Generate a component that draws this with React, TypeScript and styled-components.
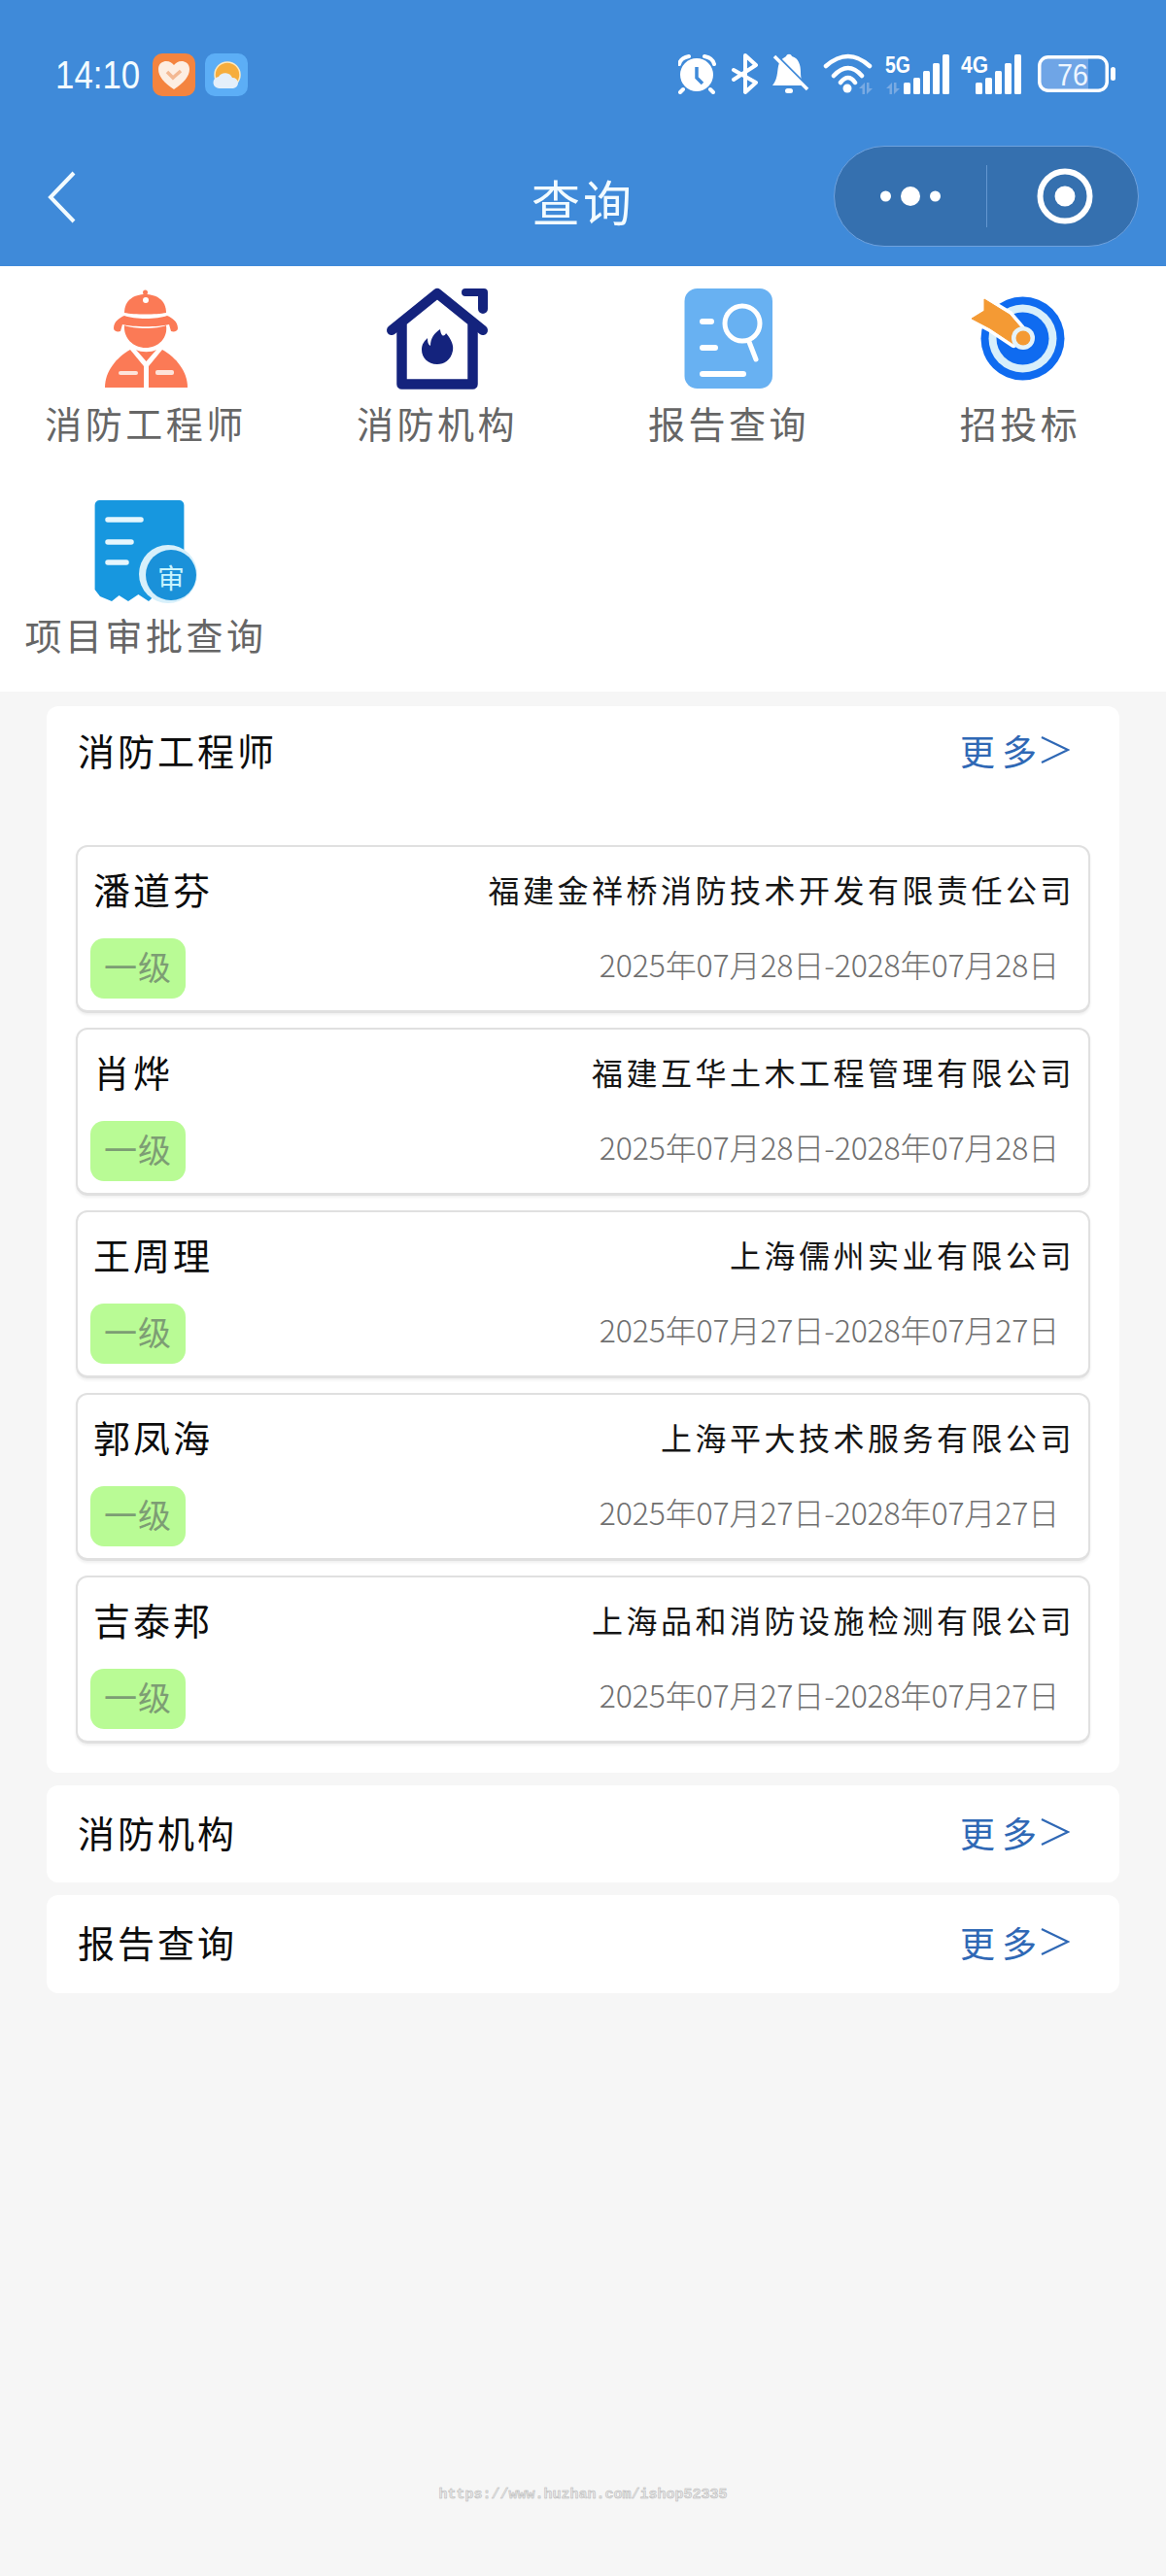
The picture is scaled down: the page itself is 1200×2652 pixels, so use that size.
import React from "react";
import styled, { createGlobalStyle } from "styled-components";

const GlobalStyle = createGlobalStyle`
  html, body { margin: 0; padding: 0; background: #f6f6f6; }
  body { font-family: "Noto Sans CJK SC", "Liberation Sans", sans-serif; }
  * { box-sizing: border-box; }
`;

const cjk = `"Noto Sans CJK SC", sans-serif`;

const engineers = [
  { name: "潘道芬", company: "福建金祥桥消防技术开发有限责任公司", term: "2025年07月28日-2028年07月28日" },
  { name: "肖烨", company: "福建互华土木工程管理有限公司", term: "2025年07月28日-2028年07月28日" },
  { name: "王周理", company: "上海儒州实业有限公司", term: "2025年07月27日-2028年07月27日" },
  { name: "郭凤海", company: "上海平大技术服务有限公司", term: "2025年07月27日-2028年07月27日" },
  { name: "吉泰邦", company: "上海品和消防设施检测有限公司", term: "2025年07月27日-2028年07月27日" },
];

const Page = styled.div`
  width: 1200px;
  height: 2652px;
  background: #f6f6f6;
  display: flex;
  flex-direction: column;
`;

const Header = styled.header`
  height: 274px;
  background: #3f8ad9;
  color: #fff;
  display: flex;
  flex-direction: column;
  flex-shrink: 0;
`;

const StatusBar = styled.div`
  height: 150px;
  padding: 55px 50px 0 57px;
  display: flex;
  justify-content: space-between;
  align-items: flex-start;
`;

const StatusLeft = styled.div`
  display: flex;
  align-items: center;
  gap: 10px;
`;

const ClockSlot = styled.div`
  width: 90px;
`;

const Clock = styled.span`
  display: inline-block;
  font-size: 41px;
  line-height: 44px;
  font-family: "Liberation Sans", sans-serif;
  color: #f2fbff;
  white-space: nowrap;
  transform: scaleX(0.85);
  transform-origin: left center;
`;

const AppBadge = styled.svg`
  width: 44px;
  height: 44px;
  display: block;
`;

const StatusGlyphs = styled.svg`
  width: 452px;
  height: 50px;
  margin-top: -5px;
  display: block;
`;

const NavBar = styled.div`
  flex: 1;
  padding: 0 28px;
  display: grid;
  grid-template-columns: 1fr auto 1fr;
  align-items: start;
`;

const BackIcon = styled.svg`
  width: 34px;
  height: 56px;
  margin: 25px 0 0 18px;
  display: block;
`;

const NavTitle = styled.h1`
  margin: 25px 0 0;
  font-size: 50px;
  line-height: 62px;
  font-weight: 400;
  letter-spacing: 3px;
  font-family: ${cjk};
  color: #f2fbff;
`;

const Capsule = styled.div`
  justify-self: end;
  width: 314px;
  height: 104px;
  border-radius: 52px;
  background: #3570af;
  border: 1.5px solid #6fa2de;
  display: flex;
  align-items: center;
`;

const CapsuleSide = styled.div`
  flex: 1;
  height: 100%;
  display: flex;
  align-items: center;
  justify-content: center;
`;

const CapsuleDivider = styled.div`
  width: 1px;
  height: 64px;
  background: #6397d0;
`;

const RingIcon = styled.svg`
  width: 58px;
  height: 58px;
  margin-left: 5px;
  display: block;
`;

const Shortcuts = styled.section`
  background: #fff;
  height: 438px;
  flex-shrink: 0;
  display: grid;
  grid-template-columns: repeat(4, 300px);
  grid-auto-rows: 218px;
  padding-top: 22px;
`;

const Shortcut = styled.div`
  display: flex;
  flex-direction: column;
  align-items: center;
`;

const ShortcutIcon = styled.svg`
  width: 110px;
  height: 106px;
  display: block;
  overflow: visible;
`;

const ShortcutLabel = styled.span`
  margin-top: 9px;
  font-size: 38px;
  line-height: 48px;
  color: #666;
  font-family: ${cjk};
  letter-spacing: 3.5px;
  white-space: nowrap;
`;

const Sections = styled.main`
  padding: 15px 48px 0;
  display: flex;
  flex-direction: column;
  gap: 13px;
`;

const Panel = styled.section`
  background: #fff;
  border-radius: 12px;
`;

const PanelHead = styled.div<{ $height: number }>`
  height: ${(p) => p.$height}px;
  padding: 0 51px 5px 32px;
  display: flex;
  align-items: center;
  justify-content: space-between;
`;

const PanelTitle = styled.h2`
  margin: 0;
  font-size: 38px;
  line-height: 48px;
  font-weight: 400;
  color: #0c0c0c;
  font-family: ${cjk};
  letter-spacing: 3px;
`;

const More = styled.span`
  display: flex;
  align-items: center;
  font-size: 36px;
  line-height: 48px;
  color: #2f68b5;
  font-family: ${cjk};
  letter-spacing: 7px;
`;

const MoreChevron = styled.svg`
  width: 32px;
  height: 30px;
  margin-left: -5px;
  display: block;
`;

const CardList = styled.div`
  padding: 48px 30px 30px;
  display: flex;
  flex-direction: column;
  gap: 15px;
`;

const Card = styled.article`
  height: 173px;
  border: 2px solid #e0e0e0;
  border-bottom-width: 3px;
  border-radius: 12px;
  box-shadow: 0 2px 3px #f0f0f0;
  padding: 19px 14px 0 13px;
  display: flex;
  flex-direction: column;
`;

const CardRow = styled.div<{ $offset?: number }>`
  margin-top: ${(p) => p.$offset ?? 0}px;
  display: flex;
  justify-content: space-between;
  align-items: center;
`;

const Person = styled.span`
  margin-left: 3px;
  font-size: 38px;
  line-height: 48px;
  color: #0c0c0c;
  font-family: ${cjk};
  letter-spacing: 3px;
`;

const Company = styled.span`
  font-size: 32px;
  line-height: 48px;
  color: #161616;
  font-family: ${cjk};
  letter-spacing: 3.5px;
  white-space: nowrap;
`;

const Level = styled.span`
  width: 98px;
  height: 62px;
  border-radius: 14px;
  background: #b9fb95;
  color: #7d9d74;
  font-size: 34px;
  line-height: 57px;
  letter-spacing: 1px;
  text-align: center;
  font-family: ${cjk};
`;

const Term = styled.span`
  margin: 0 16px 10px 0;
  font-size: 32px;
  line-height: 48px;
  color: #707070;
  font-family: ${cjk};
  font-weight: 300;
  letter-spacing: -0.15px;
  white-space: nowrap;
`;

const Watermark = styled.div`
  margin-top: auto;
  margin-bottom: 73px;
  text-align: center;
  font-family: "Liberation Mono", monospace;
  font-size: 15px;
  font-weight: 700;
  line-height: 20px;
  color: #e6e6e6;
  -webkit-text-stroke: 0.5px #b5b5b5;
`;

const SyncArrows = ({ x }: { x: number }) => (
  <g transform={`translate(${x} 0)`} fill="#79aae2">
    <path d="M890 85 V97 H887.5 V91 H884 Z" />
    <path d="M892 97 V85 H894.5 V91 H898 Z" />
  </g>
);

const SignalBars = ({ x }: { x: number }) => (
  <g transform={`translate(${x} 0)`} fill="#fff">
    <rect x="930" y="85" width="7" height="12" rx="1.5" />
    <rect x="940" y="80" width="7" height="17" rx="1.5" />
    <rect x="950" y="73" width="7" height="24" rx="1.5" />
    <rect x="960" y="65" width="7" height="32" rx="1.5" />
    <rect x="970" y="56" width="7" height="41" rx="1.5" />
  </g>
);

// viewBox follows page coordinates, easier to check against the screenshot
const StatusIcons = () => (
  <StatusGlyphs viewBox="698 50 452 50" fill="#fff" aria-hidden="true">
    {/* alarm */}
    <circle cx="717" cy="77" r="17" />
    <path d="M699 66 C700 61 704 59 709 58 M735 66 C734 61 730 59 725 58 M703 92 L700 95 M731 92 L734 95" stroke="#fff" strokeWidth="4" strokeLinecap="round" fill="none" />
    <path d="M717 69 V80 L723 86" stroke="#3f8ad9" strokeWidth="3.5" fill="none" />
    {/* bluetooth */}
    <path d="M755 72 L778 85 L767 95 V57 L778 67 L755 82" stroke="#fff" strokeWidth="4" strokeLinejoin="round" strokeLinecap="round" fill="none" />
    {/* muted bell */}
    <path d="M795 88 C802 80 799 68 803 63 C805 60 808 59 809 58 C810 55 814 55 815 58 C822 60 824 67 824 74 C824 80 825 85 828 88 Z" />
    <rect x="808" y="91" width="8" height="5" rx="2.5" />
    <path d="M799 58 L833 92" stroke="#3f8ad9" strokeWidth="4" />
    <path d="M797 58 L831 92" stroke="#fff" strokeWidth="3.5" />
    {/* wifi */}
    <path d="M850 68 Q873 48 895 68 M858 78 Q873 62 887 78 M865 85 Q873 75 880 85" stroke="#fff" strokeWidth="4.5" strokeLinecap="round" fill="none" />
    <circle cx="872" cy="91" r="4.5" />
    <SyncArrows x={0} />
    {/* 5G */}
    <text x="911" y="75" fontSize="23" fontWeight="700" fontFamily="Liberation Sans, sans-serif" textLength="26" lengthAdjust="spacingAndGlyphs">5G</text>
    <SyncArrows x={28} />
    <SignalBars x={0} />
    {/* 4G */}
    <text x="989" y="75" fontSize="23" fontWeight="700" fontFamily="Liberation Sans, sans-serif" textLength="28" lengthAdjust="spacingAndGlyphs">4G</text>
    <SignalBars x={74} />
    {/* battery */}
    <path d="M1071 68 a8 8 0 0 1 8 -8 H1120 V93 H1079 a8 8 0 0 1 -8 -8 Z" fill="#6fa5e6" />
    <rect x="1069.75" y="58.75" width="69.5" height="34.5" rx="9" fill="none" stroke="#fff" strokeWidth="3.5" />
    <text x="1088" y="88" fontSize="32" fontFamily="Liberation Sans, sans-serif" textLength="32" lengthAdjust="spacingAndGlyphs" fill="#eef6ff">76</text>
    <rect x="1143" y="69" width="5" height="14" rx="2.5" />
  </StatusGlyphs>
);

const FiremanIcon = () => (
  <ShortcutIcon viewBox="0 0 110 106" aria-hidden="true">
    <g fill="#fb7a56">
      <circle cx="54.5" cy="5" r="2.5" />
      <path d="M33 26 C33 13 43 7 54.5 7 C66 7 76 13 76 26 C66 28 43 28 33 26 Z" />
      <path d="M22 42 C22 35 28 31 33 29 C44 33 66 33 77 29 C82 31 88 35 88 42 C88 45 84 46 81 45 L79 38 C68 41 42 41 31 38 L29 45 C26 46 22 45 22 42 Z" />
      <path d="M33 39 C43 43 67 43 76 39 C78 52 68 62 55 62 C42 62 32 52 33 39 Z" />
      <path d="M39 64 L53 81 V103 H13 C13 86 25 72 39 64 Z" />
      <path d="M72 64 L58 81 V103 H98 C98 86 86 72 72 64 Z" />
      <path d="M45 64 C50 67 61 67 66 64 L55.5 76 Z" />
    </g>
    <circle cx="55" cy="13" r="3" fill="#fff" />
    <rect x="27" y="86" width="20" height="4" rx="2" fill="#fde3da" />
    <rect x="65" y="85" width="19" height="5" rx="2" fill="#fde3da" />
  </ShortcutIcon>
);

const InstitutionIcon = () => (
  <ShortcutIcon viewBox="0 0 110 106" aria-hidden="true">
    <path d="M8 44 L55 6 L102 44" fill="none" stroke="#14237d" strokeWidth="10" strokeLinecap="round" strokeLinejoin="round" />
    <path d="M18.5 38 V99.5 H91.5 V38" fill="none" stroke="#14237d" strokeWidth="10.5" strokeLinejoin="round" />
    <path d="M84 1 H103 a4 4 0 0 1 4 4 V22 a5 5 0 0 1 -10 0 V9 H84 a4 4 0 0 1 0 -8 Z" fill="#14237d" />
    <path d="M58 43 C59 52 63 50 64 47 C70 54 72 60 71 65 C69 75 62 79 55 79 C45 79 39 72 39 64 C39 58 42 55 45 52 C45 57 46 59 48 60 C48 52 52 47 58 43 Z" fill="#14237d" />
  </ShortcutIcon>
);

const ReportIcon = () => (
  <ShortcutIcon viewBox="0 0 110 106" aria-hidden="true">
    <rect x="9.5" y="1" width="90.5" height="103" rx="13" fill="#68b1f2" />
    <circle cx="69" cy="37" r="18" fill="none" stroke="#fff" strokeWidth="5" />
    <path d="M76 56 L83 74" stroke="#fff" strokeWidth="5" strokeLinecap="round" />
    <path d="M28 35 H37 M28 62 H41 M28 89 H70" stroke="#fff" strokeWidth="6" strokeLinecap="round" />
  </ShortcutIcon>
);

const TargetIcon = () => (
  <ShortcutIcon viewBox="0 0 110 106" aria-hidden="true">
    <circle cx="57.5" cy="52.5" r="43" fill="#0f6bf0" />
    <circle cx="57.5" cy="52.5" r="35" fill="#d8effb" />
    <circle cx="57.5" cy="52.5" r="27" fill="#0f6bf0" />
    <path d="M18 12 L44 28 L56 42 L48 58 L24 42 L5 32 L18 24 Z" fill="#fff" stroke="#fff" strokeWidth="8" strokeLinejoin="round" />
    <path d="M18 12 L44 28 L56 42 L48 58 L24 42 L5 32 L18 24 Z" fill="#f49a34" strokeLinejoin="round" stroke="#f49a34" strokeWidth="1" />
    <circle cx="58" cy="52" r="12" fill="#e4f3fb" />
    <circle cx="58" cy="52" r="7.5" fill="#f49a34" />
  </ShortcutIcon>
);

const ApprovalIcon = () => (
  <ShortcutIcon viewBox="0 0 110 106" aria-hidden="true">
    <path d="M2.6 6 a5 5 0 0 1 5 -5 H89.4 a5 5 0 0 1 5 5 V70 L58 105 L47.4 98 L37 105 L27.5 99 L20 105 L8 100 L2.6 93 Z" fill="#1797df" />
    <path d="M16 21 H50 M16 44 H40 M16 65 H35" stroke="#e6f6fd" strokeWidth="5.5" strokeLinecap="round" />
    <circle cx="78" cy="77" r="30" fill="#d7f0fb" />
    <circle cx="81" cy="78" r="26" fill="#1a91d9" />
    <text x="81" y="92" fontSize="28" textAnchor="middle" fill="#c8f4ff" fontFamily="Noto Sans CJK SC, sans-serif">审</text>
  </ShortcutIcon>
);

const shortcuts = [
  { label: "消防工程师", icon: <FiremanIcon /> },
  { label: "消防机构", icon: <InstitutionIcon /> },
  { label: "报告查询", icon: <ReportIcon /> },
  { label: "招投标", icon: <TargetIcon /> },
  { label: "项目审批查询", icon: <ApprovalIcon /> },
];

const MoreLink = () => (
  <More>
    更多
    <MoreChevron viewBox="0 0 32 30" aria-hidden="true">
      <path d="M3 2 L30 15 L3 28" fill="none" stroke="#2f68b5" strokeWidth="2.2" />
    </MoreChevron>
  </More>
);

const App: React.FC = () => (
  <Page>
    <GlobalStyle />
    <Header>
      <StatusBar>
        <StatusLeft>
          <ClockSlot>
            <Clock>14:10</Clock>
          </ClockSlot>
          <AppBadge viewBox="0 0 44 44" aria-hidden="true">
            <rect width="44" height="44" rx="10" fill="#f4843f" />
            <path d="M22 37 C12 30 6 24 6 16 C6 10 11 8 14 8 C18 8 20 10 22 12 C24 10 26 8 30 8 C33 8 38 10 38 16 C38 24 32 30 22 37 Z" fill="#fdeee2" />
            <path d="M15 19 L21 25 L29 18" fill="none" stroke="#f3b892" strokeWidth="3.5" />
          </AppBadge>
          <AppBadge viewBox="0 0 44 44" aria-hidden="true">
            <rect width="44" height="44" rx="10" fill="#5caef6" />
            <circle cx="23" cy="22" r="13" fill="#f6ad3c" stroke="#fde9c0" strokeWidth="1.5" />
            <path d="M15 36 a6 6 0 0 1 -1 -12 a8 8 0 0 1 14 1 a5.5 5.5 0 0 1 1 11 Z" fill="#e4effa" />
          </AppBadge>
        </StatusLeft>
        <StatusIcons />
      </StatusBar>
      <NavBar>
        <BackIcon viewBox="0 0 34 56" aria-hidden="true">
          <path d="M30 3 L6 28 L30 53" fill="none" stroke="#f2fbff" strokeWidth="4" />
        </BackIcon>
        <NavTitle>查询</NavTitle>
        <Capsule>
          <CapsuleSide>
            <svg width="62" height="24" viewBox="0 0 62 24" fill="#fff" aria-hidden="true">
              <circle cx="5.5" cy="12" r="5.5" />
              <circle cx="31" cy="12" r="10" />
              <circle cx="56.5" cy="12" r="5.5" />
            </svg>
          </CapsuleSide>
          <CapsuleDivider />
          <CapsuleSide>
            <RingIcon viewBox="0 0 58 58" aria-hidden="true">
              <circle cx="29" cy="29" r="25.5" fill="none" stroke="#fff" strokeWidth="6" />
              <circle cx="29" cy="29" r="10.5" fill="#fff" />
            </RingIcon>
          </CapsuleSide>
        </Capsule>
      </NavBar>
    </Header>
    <Shortcuts>
      {shortcuts.map((s) => (
        <Shortcut key={s.label}>
          {s.icon}
          <ShortcutLabel>{s.label}</ShortcutLabel>
        </Shortcut>
      ))}
    </Shortcuts>
    <Sections>
      <Panel>
        <PanelHead $height={95}>
          <PanelTitle>消防工程师</PanelTitle>
          <MoreLink />
        </PanelHead>
        <CardList>
          {engineers.map((e) => (
            <Card key={e.name}>
              <CardRow>
                <Person>{e.name}</Person>
                <Company>{e.company}</Company>
              </CardRow>
              <CardRow $offset={27}>
                <Level>一级</Level>
                <Term>{e.term}</Term>
              </CardRow>
            </Card>
          ))}
        </CardList>
      </Panel>
      <Panel>
        <PanelHead $height={100}>
          <PanelTitle>消防机构</PanelTitle>
          <MoreLink />
        </PanelHead>
      </Panel>
      <Panel>
        <PanelHead $height={101}>
          <PanelTitle>报告查询</PanelTitle>
          <MoreLink />
        </PanelHead>
      </Panel>
    </Sections>
    <Watermark>https://www.huzhan.com/ishop52335</Watermark>
  </Page>
);

export default App;
